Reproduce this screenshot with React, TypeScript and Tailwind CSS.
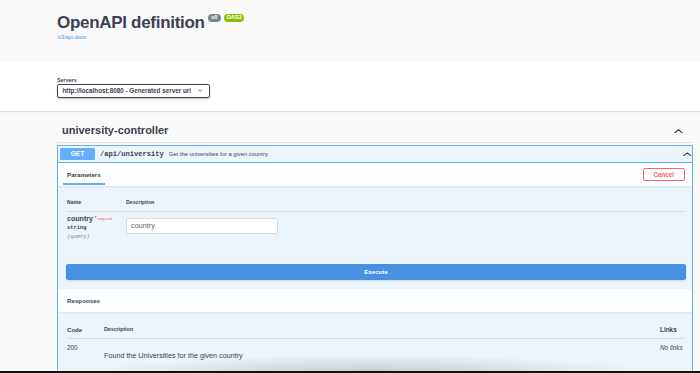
import { ReactNode } from "react";

const sans = { fontFamily: '"Liberation Sans", Arial, sans-serif' };

function ChevronUp({ className }: { className?: string }) {
  return (
    <svg viewBox="0 0 10 5" className={className} fill="none" aria-hidden="true">
      <polyline points="0.8,4.4 5,0.8 9.2,4.4" stroke="#3b4151" strokeWidth="1.3" strokeLinecap="round" strokeLinejoin="round" />
    </svg>
  );
}

function SectionHeader({ children, right }: { children: ReactNode; right?: ReactNode }) {
  return (
    <div className="flex h-[23px] items-center justify-between bg-[#fdfeff] pl-[9px] pr-[7px] shadow-[0_1px_2px_rgba(0,0,0,0.08)]">
      {children}
      {right}
    </div>
  );
}

export default function App() {
  return (
    <div
      className="relative h-[373px] w-[700px] overflow-hidden bg-[#fafafa] text-[#3b4151]"
      style={sans}
    >
      {/* info header */}
      <div className="h-[62px] pl-[57px] pt-[13.5px]">
        <div className="flex items-start">
          <h1 className="text-[17px] font-bold leading-[17px] tracking-[-0.3px]">OpenAPI definition</h1>
          <span className="ml-[3px] mt-[0.5px] flex h-[7.5px] w-[13.5px] items-center justify-center rounded-full bg-[#7d8492] text-[5.6px] font-bold leading-none text-white">
            v0
          </span>
          <span className="ml-[3px] mt-[0.5px] flex h-[7.5px] w-[20px] items-center justify-center rounded-full bg-[#89bf04] text-[5.6px] font-bold leading-none text-white">
            OAS3
          </span>
        </div>
        <a className="mt-[3px] block text-[5.4px] leading-[6px] text-[#4990e2]">/v3/api-docs</a>
      </div>

      {/* servers */}
      <div className="h-[49px] bg-white pl-[57px] pt-[15px] shadow-[0_1px_1px_rgba(0,0,0,0.12)]">
        <div className="text-[5.4px] font-bold leading-[6px]">Servers</div>
        <div className="mt-[1px] flex h-[13.5px] w-[152.5px] items-center justify-between rounded-[2px] border-[1.5px] border-[#41444e] bg-white pl-[4.5px] pr-[6px] text-[6.3px] font-bold shadow-[0_1px_2px_rgba(0,0,0,0.25)]">
          <span>http://localhost:8080 - Generated server url</span>
          <svg viewBox="0 0 6 4" className="h-[3px] w-[4.5px]" fill="none" aria-hidden="true">
            <polyline points="0.7,0.8 3,3 5.3,0.8" stroke="#3b4151" strokeWidth="1" />
          </svg>
        </div>
      </div>

      <div className="pl-[57px] pr-[7px]">
        {/* tag heading */}
        <div className="flex items-start justify-between border-b border-[#e3e4e6] pb-[6.5px] pl-[5px] pr-[10px] pt-[13.5px]">
          <h3 className="text-[11px] font-bold leading-[11px]">university-controller</h3>
          <ChevronUp className="mt-[4px] h-[4.5px] w-[9px]" />
        </div>

        {/* operation */}
        <div className="mt-[2px] border border-[#61affe] bg-[#ecf4fc]">
          <div className="flex h-[17px] items-center border-b border-[#61affe] pl-[2px] pr-0">
            <span className="flex h-[12px] w-[35px] items-center justify-center rounded-[1.5px] bg-[#61affe] text-[6.5px] font-bold text-white">
              GET
            </span>
            <span
              className="ml-[5px] text-[7.1px] font-bold"
              style={{ fontFamily: '"Liberation Mono", "Courier New", monospace' }}
            >
              /api/university
            </span>
            <span className="ml-[5px] text-[5.8px]">Get the universities for a given country</span>
            <ChevronUp className="ml-auto mr-[0.5px] h-[4.5px] w-[8.5px]" />
          </div>

          <SectionHeader
            right={
              <button className="flex h-[13px] w-[42.5px] items-center justify-center rounded-[2px] border border-[#ff6060] bg-transparent text-[6.3px] font-bold text-[#ff6060]">
                Cancel
              </button>
            }
          >
            <div className="relative flex h-full items-center">
              <span className="text-[6.2px] font-bold">Parameters</span>
              <span className="absolute bottom-[1px] left-[-4px] right-[-4px] h-[2px] bg-[#61affe]" />
            </div>
          </SectionHeader>

          {/* parameters body */}
          <div className="pl-[9px] pr-[7px]">
            <div className="flex border-b border-[#d8dde4] pb-[6px] pt-[13px] text-[5.2px] font-bold leading-[6px]">
              <span className="w-[59px]">Name</span>
              <span>Description</span>
            </div>
            <div className="flex h-[46px] pt-[6px]">
              <div className="mt-[-3px] w-[59px]">
                <div className="flex items-start">
                  <span className="text-[7.1px] font-bold leading-[9px]">country</span>
                  <span className="ml-[1.5px] mt-[0.5px] text-[4px] leading-[5px] text-[#ff6060]">
                    <span className="text-[5px] text-[#f00]">*</span> required
                  </span>
                </div>
                <div
                  className="mt-[1px] text-[5.4px] font-bold leading-[7px]"
                  style={{ fontFamily: '"Liberation Mono", "Courier New", monospace' }}
                >
                  string
                </div>
                <div
                  className="mt-[1.5px] text-[5.4px] italic leading-[7px] text-[#808080]"
                  style={{ fontFamily: '"Liberation Mono", "Courier New", monospace' }}
                >
                  (query)
                </div>
              </div>
              <div className="flex h-[16px] w-[152px] items-center rounded-[2px] border border-[#d9d9d9] bg-white pl-[4px] text-[7.3px] text-[#5d6270]">
                country
              </div>
            </div>
          </div>
          <div className="pb-[9px] pl-[8px] pr-[6px] pt-[6px]">
            <button className="flex h-[16px] w-full items-center justify-center rounded-[2px] border border-[#4990e2] bg-[#4990e2] text-[6.2px] font-bold text-white shadow-[0_1px_2px_rgba(0,0,0,0.1)]">
              Execute
            </button>
          </div>

          <SectionHeader>
            <span className="text-[6.2px] font-bold">Responses</span>
          </SectionHeader>

          {/* responses body */}
          <div className="pb-[14px] pl-[9px] pr-[7px]">
            <div className="flex items-end border-b border-[#d8dde4] pb-[5px] pt-[14px] font-bold leading-[7px]">
              <span className="w-[37px] text-[6.1px]">Code</span>
              <span className="flex-1 text-[5.3px]">Description</span>
              <span className="w-[25px] text-[6.4px]">Links</span>
            </div>
            <div className="flex items-start">
              <span className="mt-[4.5px] w-[37px] text-[6.4px] leading-[7px]">200</span>
              <span className="mt-[12.5px] flex-1 text-[7.2px] leading-[8px]">
                Found the Universities for the given country
              </span>
              <span className="mt-[4.5px] w-[25px] text-[6.4px] italic leading-[7px]">No links</span>
            </div>
          </div>
        </div>
      </div>

      {/* blurred shadow and black edge at bottom of the capture */}
      <div className="pointer-events-none absolute bottom-[2px] left-[90px] right-[50px] h-[16px] bg-[radial-gradient(ellipse_at_bottom,rgba(0,0,0,0.16),transparent_70%)]" />
      <div className="absolute bottom-0 left-0 right-0 h-[2px] bg-[#111]" />
    </div>
  );
}
